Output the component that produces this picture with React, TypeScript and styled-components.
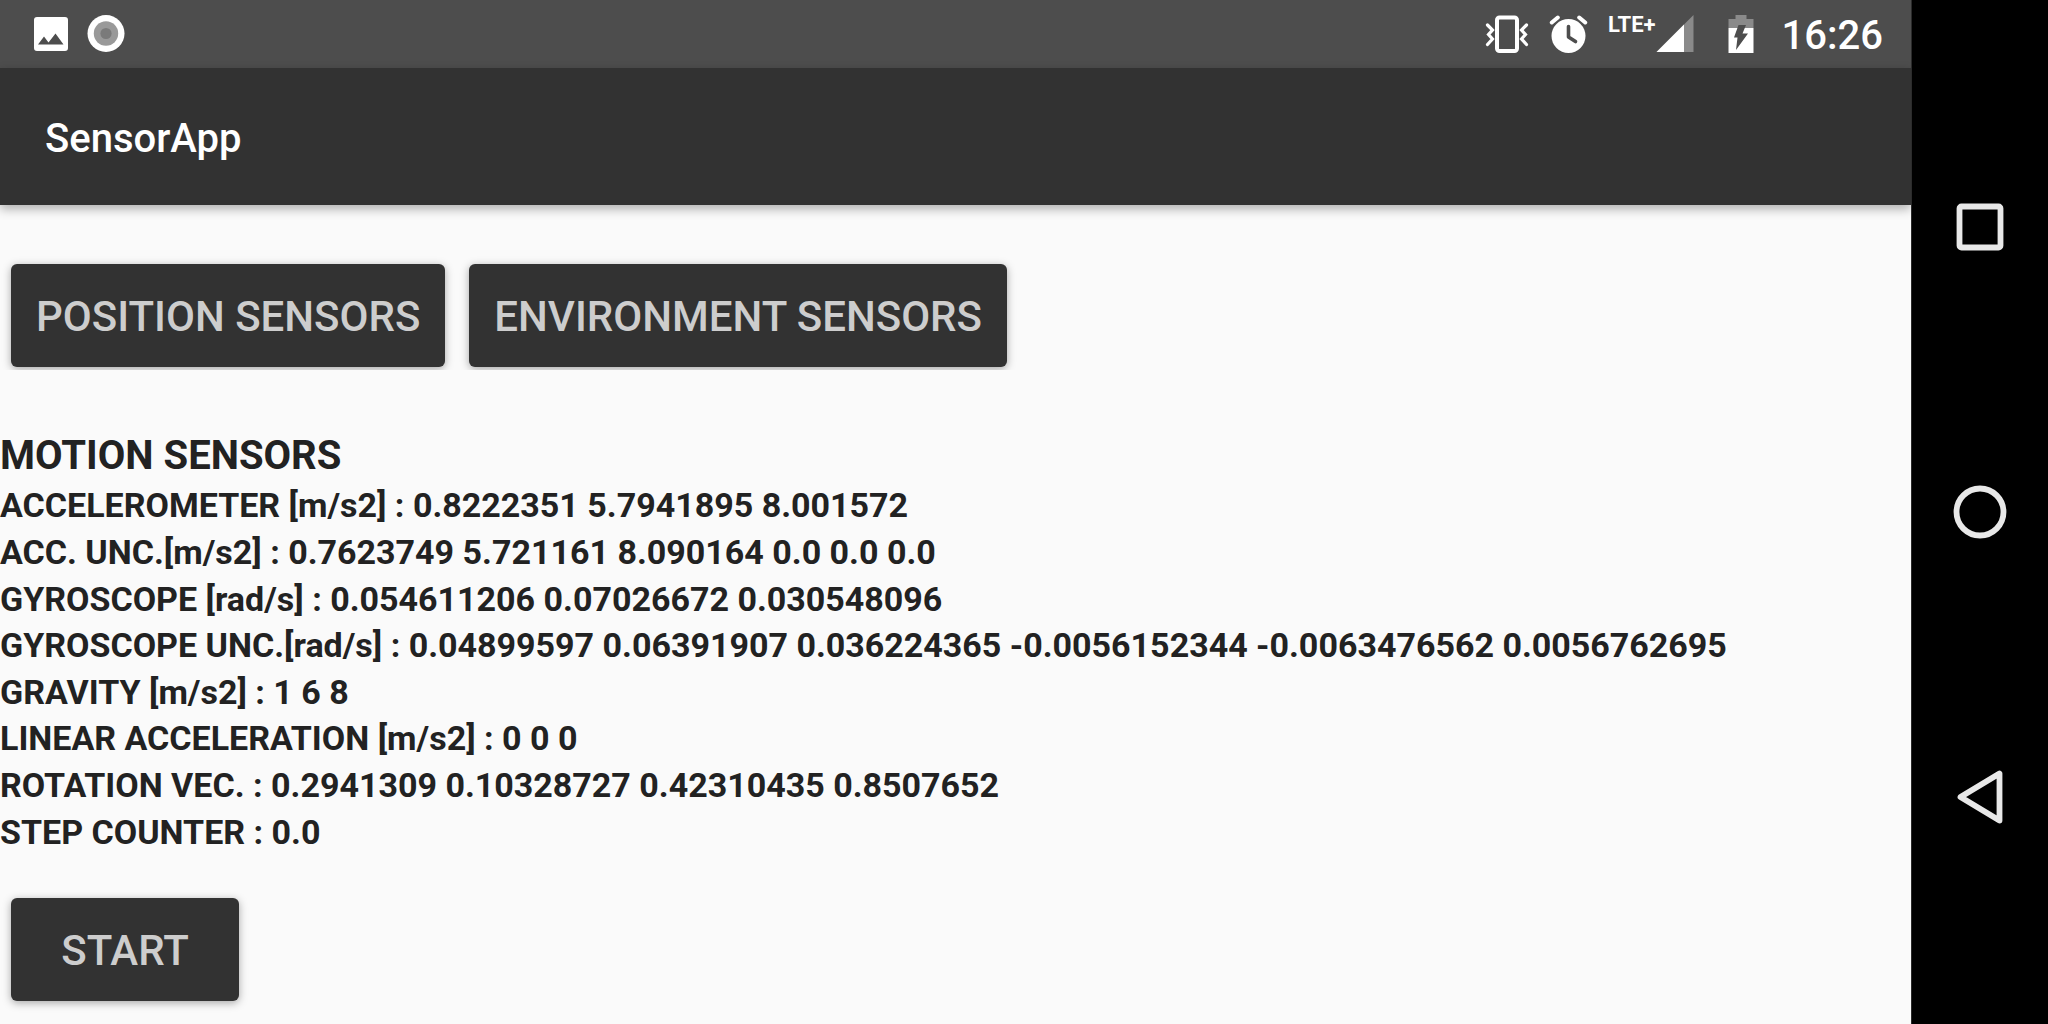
import React from "react";
import styled, { createGlobalStyle } from "styled-components";

const GlobalStyle = createGlobalStyle`
  *, *::before, *::after { box-sizing: border-box; }
  body {
    margin: 0;
    background: #fafafa;
    color: #222222;
    font-family: Roboto, "Noto Sans", sans-serif;
  }
`;

const Device = styled.div`
  display: flex;
  min-height: 100vh;
`;

const Screen = styled.div`
  display: flex;
  flex: 1;
  flex-direction: column;
  min-width: 0;
  background: #fafafa;
`;

const StatusBar = styled.div`
  display: flex;
  align-items: center;
  justify-content: space-between;
  height: 68px;
  padding: 0 28px 0 33px;
  background: #4d4d4d;
  color: #ffffff;
`;

const StatusGroup = styled.div<{ $gap: number }>`
  display: flex;
  align-items: center;
  gap: ${(p) => p.$gap}px;
`;

const Signal = styled.div`
  display: flex;
  align-items: flex-start;
`;

const NetworkType = styled.span`
  font-size: 22px;
  font-weight: 700;
  line-height: 20px;
`;

const Clock = styled.time`
  padding-top: 3px;
  font-size: 40px;
  font-weight: 500;
  line-height: 48px;
`;

const Glyph = styled.svg`
  display: block;
  flex: none;
`;

const AppBar = styled.header`
  display: flex;
  align-items: center;
  height: 137px;
  padding: 4px 45px 0;
  background: #323232;
  color: #ffffff;
  box-shadow: 0 4px 10px rgba(0, 0, 0, 0.3);
`;

const AppTitle = styled.h1`
  margin: 0;
  font-size: 40px;
  font-weight: 500;
  line-height: 48px;
`;

const Content = styled.main`
  display: flex;
  flex: 1;
  flex-direction: column;
  padding: 47px 0 11px;
`;

const ActionRow = styled.div<{ $clipped?: boolean }>`
  display: flex;
  gap: 24px;
  padding: 12px 11px ${(p) => (p.$clipped ? 3 : 12)}px;
  overflow: ${(p) => (p.$clipped ? "hidden" : "visible")};
`;

const ActionButton = styled.button`
  min-width: 228px;
  height: 103px;
  padding: 3px 25px 0;
  border: 0;
  border-radius: 6px;
  background: #323232;
  color: #cdcdcd;
  box-shadow: 0 2px 8px rgba(0, 0, 0, 0.34);
  font-family: inherit;
  font-size: 42px;
  font-weight: 500;
  line-height: 48px;
  white-space: nowrap;
  cursor: pointer;
`;

const Readings = styled.section`
  display: flex;
  flex: 1;
  flex-direction: column;
  padding: 60px 0 31px;
`;

const ReadingsTitle = styled.h2`
  margin: 0;
  font-size: 40px;
  font-weight: 700;
  line-height: 52px;
`;

const ReadingList = styled.ul`
  display: grid;
  flex: 1;
  grid-auto-rows: 1fr;
  margin: 0;
  padding: 0;
  list-style: none;
`;

const Reading = styled.li`
  display: flex;
  align-items: center;
  font-size: 34px;
  font-weight: 700;
  line-height: 40px;
`;

const NavBar = styled.nav`
  display: flex;
  flex: none;
  flex-direction: column;
  width: 137px;
  padding: 84px 0;
  border-left: 1px solid #2b2b2b;
  background: #000000;
`;

const NavButton = styled.button`
  display: flex;
  flex: 1;
  align-items: center;
  justify-content: center;
  padding: 0;
  border: 0;
  background: none;
  color: #e8e8e8;
  cursor: pointer;
`;

const ImageIcon = () => (
  <Glyph width="36" height="38" viewBox="0 0 36 38" aria-hidden="true">
    <path
      fill="#fff"
      fillRule="evenodd"
      d="M4 2h28a3 3 0 0 1 3 3v28a3 3 0 0 1-3 3H4a3 3 0 0 1-3-3V5a3 3 0 0 1 3-3zM5 29.500h25.500L22.500 18.500l-7 9-4.500-6z"
    />
  </Glyph>
);

const RecordIcon = () => (
  <Glyph width="38" height="38" viewBox="0 0 38 38" aria-hidden="true">
    <circle cx="19" cy="18.500" r="18.500" fill="#fff" />
    <circle cx="19" cy="18.500" r="12.200" fill="#999" />
    <circle cx="19" cy="18.500" r="5.600" fill="#7a7a7a" />
  </Glyph>
);

const VibrateIcon = () => (
  <Glyph width="44" height="38" viewBox="0 0 44 38" fill="none" stroke="#fff" aria-hidden="true">
    <rect x="12" y="2.500" width="20" height="33.500" rx="2.500" strokeWidth="4" />
    <path strokeWidth="3.200" strokeLinecap="round" strokeLinejoin="miter" d="M2.500 10l5 5-4 4.500 4 4.500-5 5.500M41.500 10l-5 5 4 4.500-4 4.500 5 5.500" />
  </Glyph>
);

const AlarmIcon = () => (
  <Glyph width="39" height="38" viewBox="0 0 39 38" fill="none" aria-hidden="true">
    <circle cx="19.500" cy="21" r="17" fill="#fff" />
    <path stroke="#fff" strokeWidth="4" strokeLinecap="round" d="M2.800 7.500l6-5M36.200 7.500l-6-5" />
    <path stroke="#4d4d4d" strokeWidth="3.600" strokeLinecap="round" strokeLinejoin="round" d="M19.500 11.500V22l7 4.500" />
  </Glyph>
);

const SignalIcon = () => (
  <Glyph width="38" height="38" viewBox="0 0 38 38" aria-hidden="true">
    <path fill="#8a8a8a" d="M37.500 0v37H.500z" />
    <path fill="#fff" d="M28 9.500V37H.500z" />
  </Glyph>
);

const BatteryIcon = () => (
  <Glyph width="26" height="40" viewBox="0 0 26 40" aria-hidden="true">
    <path fill="#8a8a8a" d="M7.500 1h11v4h7v9H.500V5h7z" />
    <path fill="#fff" d="M.500 14h25v25H.500z" />
    <path fill="#4d4d4d" d="M10.500 11h7.500l-3.500 8.500H20L8 36l1.500-12.500H6z" />
  </Glyph>
);

const OverviewIcon = () => (
  <Glyph width="48" height="48" viewBox="0 0 48 48" fill="none" stroke="currentColor" aria-hidden="true">
    <rect x="3.500" y="3.500" width="41" height="41" rx="2" strokeWidth="5.800" />
  </Glyph>
);

const HomeIcon = () => (
  <Glyph width="54" height="54" viewBox="0 0 54 54" fill="none" stroke="currentColor" aria-hidden="true">
    <circle cx="27" cy="27" r="23.500" strokeWidth="5.800" />
  </Glyph>
);

const BackIcon = () => (
  <Glyph width="48" height="54" viewBox="0 0 48 54" fill="none" stroke="currentColor" aria-hidden="true">
    <path strokeWidth="5.800" strokeLinejoin="round" d="M43.500 3.500v47L4.500 27z" />
  </Glyph>
);

const readings = [
  "ACCELEROMETER [m/s2] : 0.8222351 5.7941895 8.001572",
  "ACC. UNC.[m/s2] : 0.7623749 5.721161 8.090164 0.0 0.0 0.0",
  "GYROSCOPE [rad/s] : 0.054611206 0.07026672 0.030548096",
  "GYROSCOPE UNC.[rad/s] : 0.04899597 0.06391907 0.036224365 -0.0056152344 -0.0063476562 0.0056762695",
  "GRAVITY [m/s2] : 1 6 8",
  "LINEAR ACCELERATION [m/s2] : 0 0 0",
  "ROTATION VEC. : 0.2941309 0.10328727 0.42310435 0.8507652",
  "STEP COUNTER : 0.0",
];

export default function App() {
  return (
    <>
      <GlobalStyle />
      <Device>
        <Screen>
          <StatusBar>
            <StatusGroup $gap={18}>
              <ImageIcon />
              <RecordIcon />
            </StatusGroup>
            <StatusGroup $gap={34}>
              <StatusGroup $gap={20}>
                <VibrateIcon />
                <AlarmIcon />
                <Signal>
                  <NetworkType>LTE+</NetworkType>
                  <SignalIcon />
                </Signal>
              </StatusGroup>
              <StatusGroup $gap={28}>
                <BatteryIcon />
                <Clock>16:26</Clock>
              </StatusGroup>
            </StatusGroup>
          </StatusBar>
          <AppBar>
            <AppTitle>SensorApp</AppTitle>
          </AppBar>
          <Content>
            <ActionRow $clipped>
              <ActionButton type="button">POSITION SENSORS</ActionButton>
              <ActionButton type="button">ENVIRONMENT SENSORS</ActionButton>
            </ActionRow>
            <Readings>
              <ReadingsTitle>MOTION SENSORS</ReadingsTitle>
              <ReadingList>
                {readings.map((text) => (
                  <Reading key={text}>{text}</Reading>
                ))}
              </ReadingList>
            </Readings>
            <ActionRow>
              <ActionButton type="button">START</ActionButton>
            </ActionRow>
          </Content>
        </Screen>
        <NavBar aria-label="System navigation">
          <NavButton type="button" aria-label="Overview">
            <OverviewIcon />
          </NavButton>
          <NavButton type="button" aria-label="Home">
            <HomeIcon />
          </NavButton>
          <NavButton type="button" aria-label="Back">
            <BackIcon />
          </NavButton>
        </NavBar>
      </Device>
    </>
  );
}
